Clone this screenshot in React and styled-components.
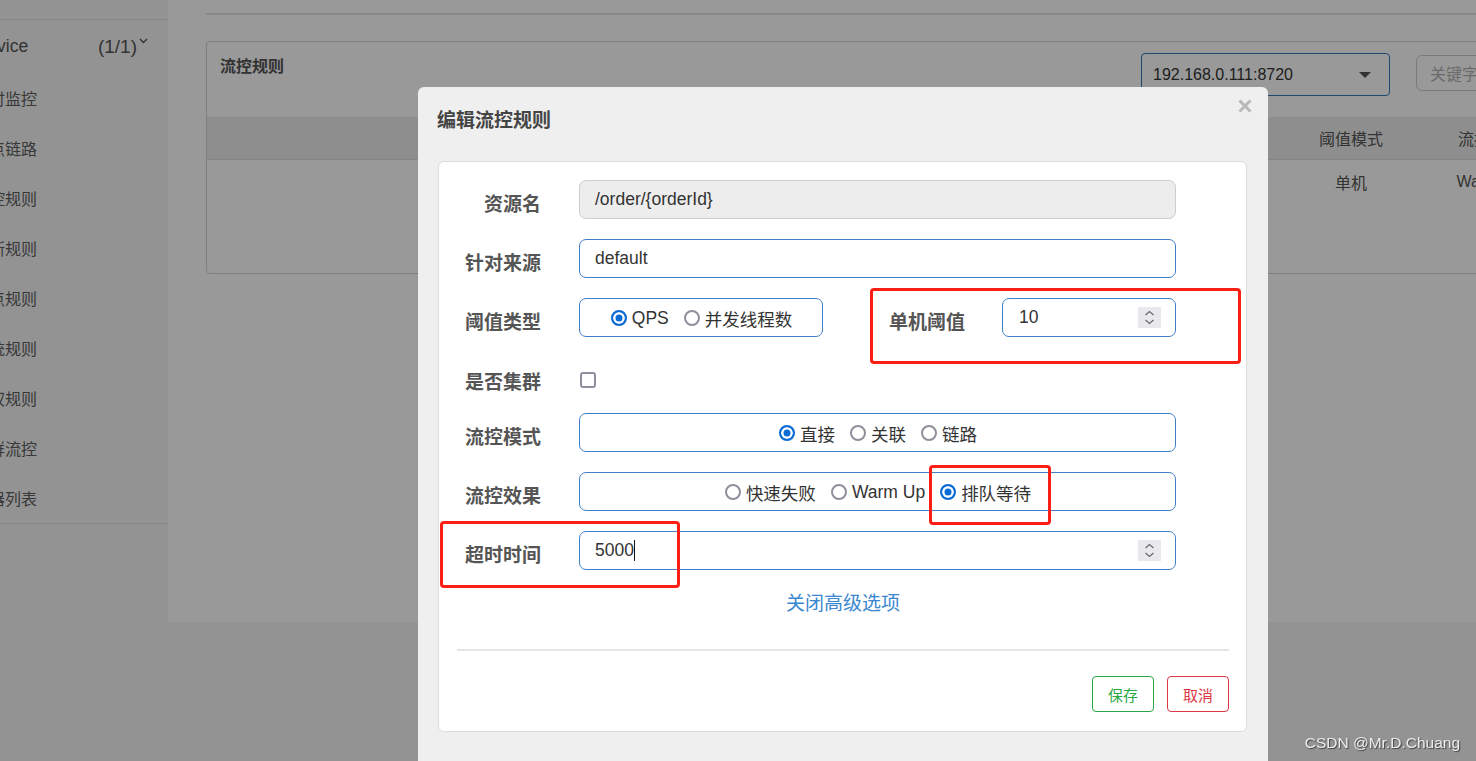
import React from 'react';
import styled, { createGlobalStyle } from 'styled-components';

const FONT = `"Liberation Sans", "Noto Sans CJK SC", sans-serif`;

const Global = createGlobalStyle`
  html, body { margin: 0; padding: 0; height: 100%; overflow: hidden; background: #f5f5f5; font-family: ${FONT}; }
  #root { height: 100%; }
  * { box-sizing: border-box; }
`;

const Page = styled.div`
  display: flex;
  width: 1476px;
  height: 761px;
`;

const Sidebar = styled.aside`
  flex: none;
  width: 168px;
  padding-top: 19px;
  overflow: hidden;
`;

const SideList = styled.div`
  border-top: 1px solid #e2e2e2;
  border-bottom: 1px solid #e2e2e2;
`;

const ServiceRow = styled.div`
  display: flex;
  align-items: center;
  height: 53px;
  padding-right: 20px;
  color: #555;
  font-size: 17.5px;
  white-space: nowrap;
`;

const ServiceName = styled.span`
  margin-left: -74px;
  flex: 1;
`;

const Count = styled.span`
  font-size: 19px;
`;

const Chevron = styled.svg`
  align-self: flex-start;
  margin-top: 18px;
  margin-left: 2px;
`;

const SideItem = styled.div`
  display: flex;
  align-items: center;
  height: 50px;
  color: #5e5e5e;
  font-size: 16px;
  white-space: nowrap;
  & > span { margin-left: -27px; }
`;

const Main = styled.main`
  flex: 1;
  min-width: 0;
  display: flex;
  flex-direction: column;
`;

const MainTop = styled.div`
  height: 622px;
  background: #fff;
  padding-left: 38px;
  overflow: hidden;
`;

const HeaderLine = styled.div`
  height: 15px;
  border-bottom: 2px solid #e4e4e4;
`;

const Card = styled.section`
  margin-top: 26px;
  width: 1400px;
  height: 233px;
  border: 1px solid #d2d2d2;
  border-radius: 4px;
  overflow: hidden;
`;

const CardHead = styled.div`
  display: flex;
  height: 75px;
  padding: 0 13px;
`;

const CardTitle = styled.div`
  flex: none;
  width: 921px;
  padding-top: 16px;
  line-height: 18px;
  font-size: 16px;
  font-weight: bold;
  color: #555;
`;

const Select = styled.div`
  flex: none;
  margin-top: 11px;
  width: 249px;
  height: 43px;
  border: 1px solid #337ab7;
  border-radius: 4px;
  display: flex;
  align-items: center;
  padding: 0 18px 0 11px;
  font-size: 16px;
  color: #333;
  &::after {
    content: '';
    margin-left: auto;
    border-left: 6px solid transparent;
    border-right: 6px solid transparent;
    border-top: 6px solid #555;
  }
`;

const Search = styled.div`
  flex: none;
  margin-left: 26px;
  margin-top: 13px;
  width: 200px;
  height: 36px;
  border: 1px solid #ccc;
  border-radius: 6px;
  padding: 0 13px;
  display: flex;
  align-items: center;
  font-size: 16px;
  color: #b3b3b3;
`;

const TableRow = styled.div`
  display: grid;
  grid-template-columns: 1092px 104px 174px;
  align-items: center;
  height: 43px;
  text-align: center;
  font-size: 16px;
  color: #555;
  background: ${p => (p.$head ? '#ededed' : '#fff')};
  border-bottom: ${p => (p.$head ? '1px solid #dcdcdc' : 'none')};
`;

const Backdrop = styled.div`
  position: fixed;
  inset: 0;
  background: rgba(0, 0, 0, 0.4);
`;

const ModalLayer = styled.div`
  position: fixed;
  inset: 0;
  overflow: hidden;
`;

const Dialog = styled.div`
  margin: 87px 0 0 418px;
  width: 850px;
  min-height: 720px;
  background: #efefef;
  border-radius: 6px;
`;

const DialogHeader = styled.div`
  display: flex;
  height: 74px;
  padding: 0 15px 0 19px;
`;

const DialogTitle = styled.h4`
  margin: 22px 0 0;
  line-height: 24px;
  font-size: 19px;
  font-weight: bold;
  color: #444;
`;

const Close = styled.svg`
  margin-left: auto;
  margin-top: 11px;
`;

const Panel = styled.div`
  margin: 0 21px 0 20px;
  background: #fff;
  border: 1px solid #dcdcdc;
  border-radius: 6px;
  padding: 18px 17px 19px 18px;
`;

const Form = styled.div`
  display: flex;
  flex-direction: column;
  gap: 20px;
`;

const Row = styled.div`
  display: flex;
  align-items: center;
  height: ${p => p.$h || 39}px;
`;

const Label = styled.label`
  flex: none;
  width: ${p => p.$w || 84}px;
  margin-right: ${p => p.$mr || 38}px;
  padding-top: ${p => p.$pt || 6}px;
  text-align: right;
  font-size: 19px;
  font-weight: bold;
  color: #555;
  white-space: nowrap;
`;

const Field = styled.div`
  flex: none;
  width: ${p => p.$w || 597}px;
  height: 39px;
  display: flex;
  align-items: center;
  justify-content: ${p => (p.$center ? 'center' : 'flex-start')};
  gap: ${p => (p.$center ? '15px' : '0')};
  padding: 0 14px 0 ${p => p.$pl || 15}px;
  border: 1px solid ${p => (p.$readonly ? '#cdcdcd' : '#3f7fc5')};
  background: ${p => (p.$readonly ? '#ededed' : '#fff')};
  border-radius: 7px;
  font-size: 17.5px;
  color: #333;
  white-space: nowrap;
`;

const Caret = styled.span`
  border-right: 1px solid #111;
  height: 21px;
  display: inline-flex;
  align-items: center;
`;

const Spinner = styled.span`
  margin-left: auto;
  width: 23px;
  height: 21px;
  background: #e9e9ed;
  display: flex;
  align-items: center;
  justify-content: center;
`;

const RadioItem = styled.span`
  display: inline-flex;
  align-items: center;
  gap: 5px;
  padding-top: 2px;
  font-size: 17.5px;
  color: #333;
`;

const RadioDot = styled.span`
  flex: none;
  width: 16px;
  height: 16px;
  margin-top: -1px;
  border-radius: 50%;
  border: 2px solid ${p => (p.$on ? '#0b6bd5' : '#8f8f9d')};
  background: ${p => (p.$on ? '#0b6bd5' : '#fff')};
  box-shadow: ${p => (p.$on ? 'inset 0 0 0 2.5px #fff' : 'none')};
`;

const Checkbox = styled.span`
  margin-left: 1px;
  margin-top: 10px;
  width: 16px;
  height: 16px;
  border: 2px solid #8f8f9d;
  border-radius: 3px;
  background: #fff;
`;

const LinkText = styled.a`
  display: block;
  text-align: center;
  line-height: 28px;
  font-size: 19px;
  color: #3a87cf;
  cursor: pointer;
`;

const Divider = styled.div`
  margin-top: 31px;
  height: 2px;
  background: #e5e5e5;
`;

const Actions = styled.div`
  margin-top: 25px;
  display: flex;
  justify-content: flex-end;
  gap: 13px;
`;

const Button = styled.button`
  width: 62px;
  height: 36px;
  border: 1px solid ${p => p.$color};
  color: ${p => p.$color};
  background: #fff;
  border-radius: 4px;
  font-family: ${FONT};
  font-size: 15px;
  padding: 0;
`;

const Mark = styled.div`
  position: absolute;
  border: 3px solid #fb1e14;
  border-radius: 4px;
  pointer-events: none;
`;

const Watermark = styled.div`
  position: fixed;
  right: 16px;
  bottom: 9px;
  font-size: 15.5px;
  color: #ececec;
  text-shadow: 1px 1px 1px rgba(0, 0, 0, 0.55);
  font-family: "Liberation Sans", sans-serif;
`;

const Radio = ({ on, children }) => (
  <RadioItem>
    <RadioDot $on={on} />
    {children}
  </RadioItem>
);

const SpinIcon = () => (
  <svg width="11" height="15" viewBox="0 0 11 15">
    <path d="M1.5 5 L5.5 1.5 L9.5 5 M1.5 10 L5.5 13.5 L9.5 10" fill="none" stroke="#6b6b6b" strokeWidth="1.3" />
  </svg>
);

const menu = ['实时监控', '簇点链路', '流控规则', '熔断规则', '热点规则', '系统规则', '授权规则', '集群流控', '机器列表'];

export default function App() {
  return (
    <>
      <Global />
      <Page>
        <Sidebar>
          <SideList>
            <ServiceRow>
              <ServiceName>order-service</ServiceName>
              <Count>(1/1)</Count>
              <Chevron width="9" height="6" viewBox="0 0 9 6">
                <path d="M1 1 L4.5 4.5 L8 1" fill="none" stroke="#555" strokeWidth="1.4" />
              </Chevron>
            </ServiceRow>
            {menu.map(m => (
              <SideItem key={m}><span>{m}</span></SideItem>
            ))}
          </SideList>
        </Sidebar>
        <Main>
          <MainTop>
            <HeaderLine />
            <Card>
              <CardHead>
                <CardTitle>流控规则</CardTitle>
                <Select>192.168.0.111:8720</Select>
                <Search>关键字</Search>
              </CardHead>
              <TableRow $head>
                <span />
                <span>阈值模式</span>
                <span>流控效果</span>
              </TableRow>
              <TableRow>
                <span />
                <span>单机</span>
                <span>Warm Up</span>
              </TableRow>
            </Card>
          </MainTop>
        </Main>
      </Page>

      <Backdrop />

      <ModalLayer>
        <Dialog>
          <DialogHeader>
            <DialogTitle>编辑流控规则</DialogTitle>
            <Close width="16" height="16" viewBox="0 0 16 16">
              <path d="M2.5 2.5 L13.5 13.5 M13.5 2.5 L2.5 13.5" stroke="#b8b8b8" strokeWidth="3" />
            </Close>
          </DialogHeader>
          <Panel>
            <Form>
              <Row>
                <Label>资源名</Label>
                <Field $readonly>/order/{'{orderId}'}</Field>
              </Row>
              <Row>
                <Label>针对来源</Label>
                <Field>default</Field>
              </Row>
              <Row>
                <Label>阈值类型</Label>
                <Field $w={244} $center>
                  <Radio on>QPS</Radio>
                  <Radio>并发线程数</Radio>
                </Field>
                <Label $w={142} $mr={37}>单机阈值</Label>
                <Field $w={174} $pl={16}>
                  10
                  <Spinner><SpinIcon /></Spinner>
                </Field>
              </Row>
              <Row $h={36}>
                <Label $pt={11}>是否集群</Label>
                <Checkbox />
              </Row>
              <Row>
                <Label>流控模式</Label>
                <Field $center>
                  <Radio on>直接</Radio>
                  <Radio>关联</Radio>
                  <Radio>链路</Radio>
                </Field>
              </Row>
              <Row>
                <Label>流控效果</Label>
                <Field $center>
                  <Radio>快速失败</Radio>
                  <Radio>Warm Up</Radio>
                  <Radio on>排队等待</Radio>
                </Field>
              </Row>
              <Row>
                <Label>超时时间</Label>
                <Field>
                  <Caret>5000</Caret>
                  <Spinner><SpinIcon /></Spinner>
                </Field>
              </Row>
              <LinkText>关闭高级选项</LinkText>
            </Form>
            <Divider />
            <Actions>
              <Button $color="#28a745">保存</Button>
              <Button $color="#dc3545">取消</Button>
            </Actions>
          </Panel>
        </Dialog>
        <Mark style={{ left: 870, top: 288, width: 371, height: 76 }} />
        <Mark style={{ left: 929, top: 465, width: 122, height: 60 }} />
        <Mark style={{ left: 440, top: 521, width: 240, height: 67 }} />
      </ModalLayer>

      <Watermark>CSDN @Mr.D.Chuang</Watermark>
    </>
  );
}
